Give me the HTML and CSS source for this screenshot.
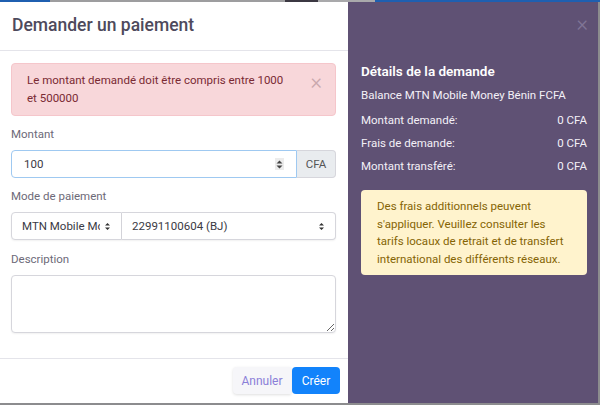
FILE: index.html
```html
<!DOCTYPE html>
<html lang="fr">
<head>
<meta charset="utf-8">
<title>Demander un paiement</title>
<link rel="stylesheet" href="styles.css">
</head>
<body>
<div class="strip">
  <span class="s-blue s1"></span><span class="s-grey s2"></span><span class="s-dark s3"></span><span class="s-light s4"></span><span class="s-blue s5"></span>
</div>
<div class="modal">
  <section class="main">
    <header class="head"><h1 class="title">Demander un paiement</h1></header>
    <div class="body">
      <div class="alert">
        <p class="alert-text">Le montant demandé doit être compris entre 1000 et 500000</p>
        <span class="alert-close">×</span>
      </div>
      <div class="group g1">
        <label class="label">Montant</label>
        <div class="input-group">
          <div class="control focus">
            <span class="value">100</span>
            <span class="spin"><svg width="7" height="9" viewBox="0 0 7 9"><path d="M3.5 0.5 L6.5 3.5 H0.5Z M3.5 8.5 L6.5 5.5 H0.5Z" fill="#444"/></svg></span>
          </div>
          <span class="addon">CFA</span>
        </div>
      </div>
      <div class="group g2">
        <label class="label">Mode de paiement</label>
        <div class="select-row">
          <div class="control sel sel1"><span class="value clip">MTN Mobile Money</span><svg class="caret" width="7" height="9" viewBox="0 0 7 9"><path d="M3.5 1 L6 3.6 H1Z M3.5 8 L6 5.4 H1Z" fill="#333"/></svg></div>
          <div class="control sel sel2"><span class="value">22991100604 (BJ)</span><svg class="caret" width="7" height="9" viewBox="0 0 7 9"><path d="M3.5 1 L6 3.6 H1Z M3.5 8 L6 5.4 H1Z" fill="#333"/></svg></div>
        </div>
      </div>
      <div class="group g3">
        <label class="label">Description</label>
        <textarea class="textarea"></textarea>
      </div>
    </div>
    <footer class="foot">
      <button class="btn btn-cancel">Annuler</button>
      <button class="btn btn-primary">Créer</button>
    </footer>
  </section>
  <aside class="side">
    <div class="side-close">×</div>
    <h2 class="side-title">Détails de la demande</h2>
    <p class="side-line">Balance MTN Mobile Money Bénin FCFA</p>
    <div class="row"><span>Montant demandé:</span><span>0 CFA</span></div>
    <div class="row"><span>Frais de demande:</span><span>0 CFA</span></div>
    <div class="row"><span>Montant transféré:</span><span>0 CFA</span></div>
    <div class="warn">Des frais additionnels peuvent s'appliquer. Veuillez consulter les tarifs locaux de retrait et de transfert international des différents réseaux.</div>
  </aside>
</div>
</body>
</html>
```

FILE: styles.css
```css
* { box-sizing: border-box; }
html, body { margin: 0; padding: 0; }
body {
  width: 600px;
  height: 405px;
  overflow: hidden;
  background: #8c8c8e;
  font-family: Roboto, "Noto Sans", sans-serif;
  font-size: 11.5px;
}
.strip { display: flex; height: 2px; }
.strip span { display: block; height: 2px; }
.s-blue { background: #1f5fb0; }
.s-grey { background: #9d9d9f; }
.s-dark { background: #3b3842; }
.s-light { background: #a9a9ab; }
.s1 { width: 50px; }
.s2 { width: 235px; }
.s3 { width: 33px; }
.s4 { width: 57px; }
.s5 { flex: 1; }

.modal { display: flex; width: 598px; height: 401px; }
.main { width: 348px; background: #fff; display: flex; flex-direction: column; }
.head { height: 49px; border-bottom: 1px solid #e4e4ea; display: flex; align-items: center; padding: 0 12px 3px; }
.title { margin: 0; font-size: 17.5px; font-weight: 500; color: #4e4a5c; }
.body { flex: 1; padding: 12px 12px 0 11px; border-bottom: 1px solid #e4e4ea; }
.alert {
  position: relative;
  background: #f8d7da;
  border: 1px solid #f5c6cb;
  border-radius: 4px;
  padding: 7px 40px 7px 15px;
  height: 53px;
  width: 325px;
}
.alert-text { margin: 0; line-height: 18px; color: #7a2a33; }
.alert-close { position: absolute; right: 13px; top: 6px; font-size: 22px; color: #c9a8ad; font-weight: 300; line-height: 24px; }
.g1, .g2 { margin-top: 9px; }
.g3 { margin-top: 10px; }
.label { display: block; color: #6d6a78; line-height: 18px; margin-bottom: 7px; }
.input-group { display: flex; width: 325px; height: 28px; }
.control {
  display: flex;
  align-items: center;
  border: 1px solid #d6d6dc;
  background: #fff;
  height: 28px;
  padding: 0 12px;
  color: #3a3a44;
}
.control.focus { flex: 1; border-color: #9fc9f1; border-radius: 4px 0 0 4px; }
.value { flex: 1; white-space: nowrap; }
.spin { width: 9px; height: 12px; background: #ececec; display: flex; align-items: center; justify-content: center; }
.addon { width: 39px; background: #e9ecef; border: 1px solid #d6d6dc; border-left: 0; border-radius: 0 4px 4px 0; display: flex; align-items: center; justify-content: center; color: #555; }
.select-row { display: flex; width: 325px; }
.sel { padding: 0 10px 0 10px; box-shadow: 0 1px 2px rgba(0,0,0,0.06); }
.sel1 { width: 111px; border-radius: 4px 0 0 4px; }
.sel2 { flex: 1; border-left: 0; border-radius: 0 4px 4px 0; }
.clip { overflow: hidden; text-overflow: clip; }
.caret { flex: none; margin-left: 4px; }
.textarea {
  display: block;
  width: 325px;
  height: 58px;
  border: 1px solid #d6d6dc;
  border-radius: 4px;
  box-shadow: 0 1px 2px rgba(0,0,0,0.06);
  font-family: inherit;
  margin: 0;
  resize: vertical;
}
.foot { height: 44px; display: flex; justify-content: flex-end; align-items: center; padding-right: 8px; padding-bottom: 1px; }
.btn { border: 0; height: 27px; font-family: inherit; font-size: 12px; border-radius: 4px; padding: 0 8px; cursor: pointer; }
.btn-cancel { background: #f6f6f9; color: #8b7fd8; box-shadow: 0 1px 3px rgba(0,0,0,0.13); width: 58px; margin-right: 1px; border-radius: 4px 0 0 4px; }
.btn-primary { background: #1283fb; color: #fff; width: 48px; }

.side { flex: 1; background: #5f5174; color: #f3f0f7; padding: 0 11px 0 13px; position: relative; }
.side-close { position: absolute; right: 10px; top: 10px; font-size: 22px; font-weight: 300; color: #807596; line-height: 24px; }
.side-title { margin: 59px 0 0; font-size: 13.5px; font-weight: 600; color: #fff; line-height: 20px; }
.side-line { margin: 4px 0 0; line-height: 20px; }
.row { display: flex; justify-content: space-between; line-height: 20px; margin-top: 3px; }
.side-line + .row { margin-top: 5px; }
.warn { margin-top: 14px; background: #fff3cd; color: #856404; border-radius: 4px; padding: 8px 16px 7px; line-height: 17.7px; height: 85px; }
```
